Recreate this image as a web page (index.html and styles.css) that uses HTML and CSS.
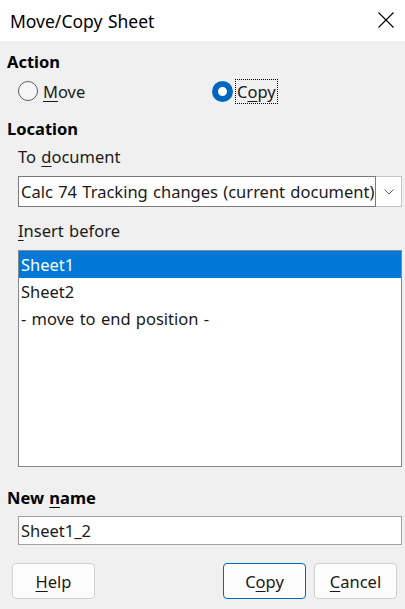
FILE: index.html
```html
<!DOCTYPE html>
<html>
<head>
<meta charset="utf-8">
<link rel="stylesheet" href="styles.css">
</head>
<body>
<div class="dialog">
  <div class="titlebar">
    <span class="title">Move/Copy Sheet</span>
    <span class="close">
      <svg width="16" height="16" viewBox="0 0 16 16"><path d="M0.5 0.5 L15.5 15.5 M15.5 0.5 L0.5 15.5" stroke="#000" stroke-width="1.1" fill="none"/></svg>
    </span>
  </div>
  <div class="content">
    <div class="section-label">Action</div>
    <div class="radio-row">
      <div class="radio"><span class="radio-dot"></span><span class="radio-text"><u>M</u>ove</span></div>
      <div class="radio checked"><span class="radio-dot"></span><span class="radio-text focus">C<u>o</u>py</span></div>
    </div>
    <div class="section-label">Location</div>
    <div class="indent">
      <div class="field-label">To <u>d</u>ocument</div>
      <div class="combo">
        <div class="combo-text">Calc 74 Tracking changes (current document)</div>
        <div class="combo-btn">
          <svg width="10" height="6" viewBox="0 0 10 6"><path d="M0.5 0.5 L5 5 L9.5 0.5" stroke="#606060" stroke-width="1" fill="none"/></svg>
        </div>
      </div>
      <div class="field-label insert"><u>I</u>nsert before</div>
      <div class="listbox">
        <div class="item selected">Sheet1</div>
        <div class="item">Sheet2</div>
        <div class="item">- move to end position -</div>
      </div>
    </div>
    <div class="section-label newname">New <u>n</u>ame</div>
    <div class="indent">
      <div class="input">Sheet1_2</div>
    </div>
  </div>
  <div class="buttons">
    <div class="btn"><u>H</u>elp</div>
    <div class="spacer"></div>
    <div class="btn default">C<u>o</u>py</div>
    <div class="btn"><u>C</u>ancel</div>
  </div>
</div>
</body>
</html>
```

FILE: styles.css
```css
* { box-sizing: border-box; }
html, body { margin: 0; padding: 0; }
body {
  background: #f0f0f0;
  font-family: "Noto Sans", "Open Sans", sans-serif;
  font-size: 16.5px;
  word-spacing: 1px;
  color: #1a1a1a;
}
u { text-decoration: underline; text-underline-offset: 3px; text-decoration-thickness: 1px; }
.dialog { width: 405px; height: 609px; display: flex; flex-direction: column; }
.titlebar {
  height: 41px; background: #fff;
  display: flex; align-items: center; justify-content: space-between;
  padding: 0 11px 0 10px;
}
.title { font-size: 17.5px; color: #000; }
.close { display: flex; margin-top: -1px; }
.content { padding: 0 3px 0 7px; }
.section-label { font-weight: bold; color: #000; font-size: 16.5px; line-height: 20px; margin-top: 11px; }
.radio-row { display: flex; height: 36px; align-items: center; padding-left: 11px; padding-top: 2px; }
.radio { display: flex; align-items: center; }
.radio:first-child { width: 194px; }
.radio-dot {
  width: 20px; height: 20px; border-radius: 50%;
  border: 1px solid #5c5c5c; background: #f6f6f6; margin-right: 5px;
}
.radio.checked .radio-dot {
  width: 21px; height: 21px; border: 6.5px solid #0067c0; background: #fff;
  margin-right: 3px;
}
.radio-text { line-height: 23px; }
.focus { outline: 1px dotted #000; outline-offset: 0; padding: 0 1px 0 1px; }
.section-label:nth-of-type(2) { margin-top: 5px; }
.indent { padding-left: 11px; }
.field-label { line-height: 20px; margin-top: 8px; margin-bottom: 9px; }
.combo { display: flex; height: 31px; }
.combo-text {
  flex: 1; background: #fff; border: 1px solid #7a7a7a;
  padding-left: 2px; line-height: 29px; white-space: nowrap; overflow: hidden;
}
.combo-btn {
  width: 26px; background: #fff; border: 1px solid #c4c4c4; border-left: none;
  display: flex; align-items: center; justify-content: center;
}
.field-label.insert { margin-top: 14px; }
.listbox { height: 217px; background: #fff; border: 1px solid #828790; }
.item { height: 27px; line-height: 27px; padding-left: 2px; }
.item.selected { background: #0078d7; color: #fff; }
.section-label.newname { margin-top: 21px; }
.input {
  margin-top: 8px; height: 29px; background: #fff; border: 1px solid #a0a0a0;
  padding-left: 2px; line-height: 27px;
}
.buttons { display: flex; padding: 0 8px 0 12px; margin-top: 18px; gap: 8px; }
.spacer { flex: 1; }
.btn {
  width: 83px; height: 36px; background: #fdfdfd; border: 1px solid #d0d0d0;
  border-radius: 4px; display: flex; align-items: center; justify-content: center;
  color: #1a1a1a;
}
.btn.default { border-color: #0067c0; }
```
